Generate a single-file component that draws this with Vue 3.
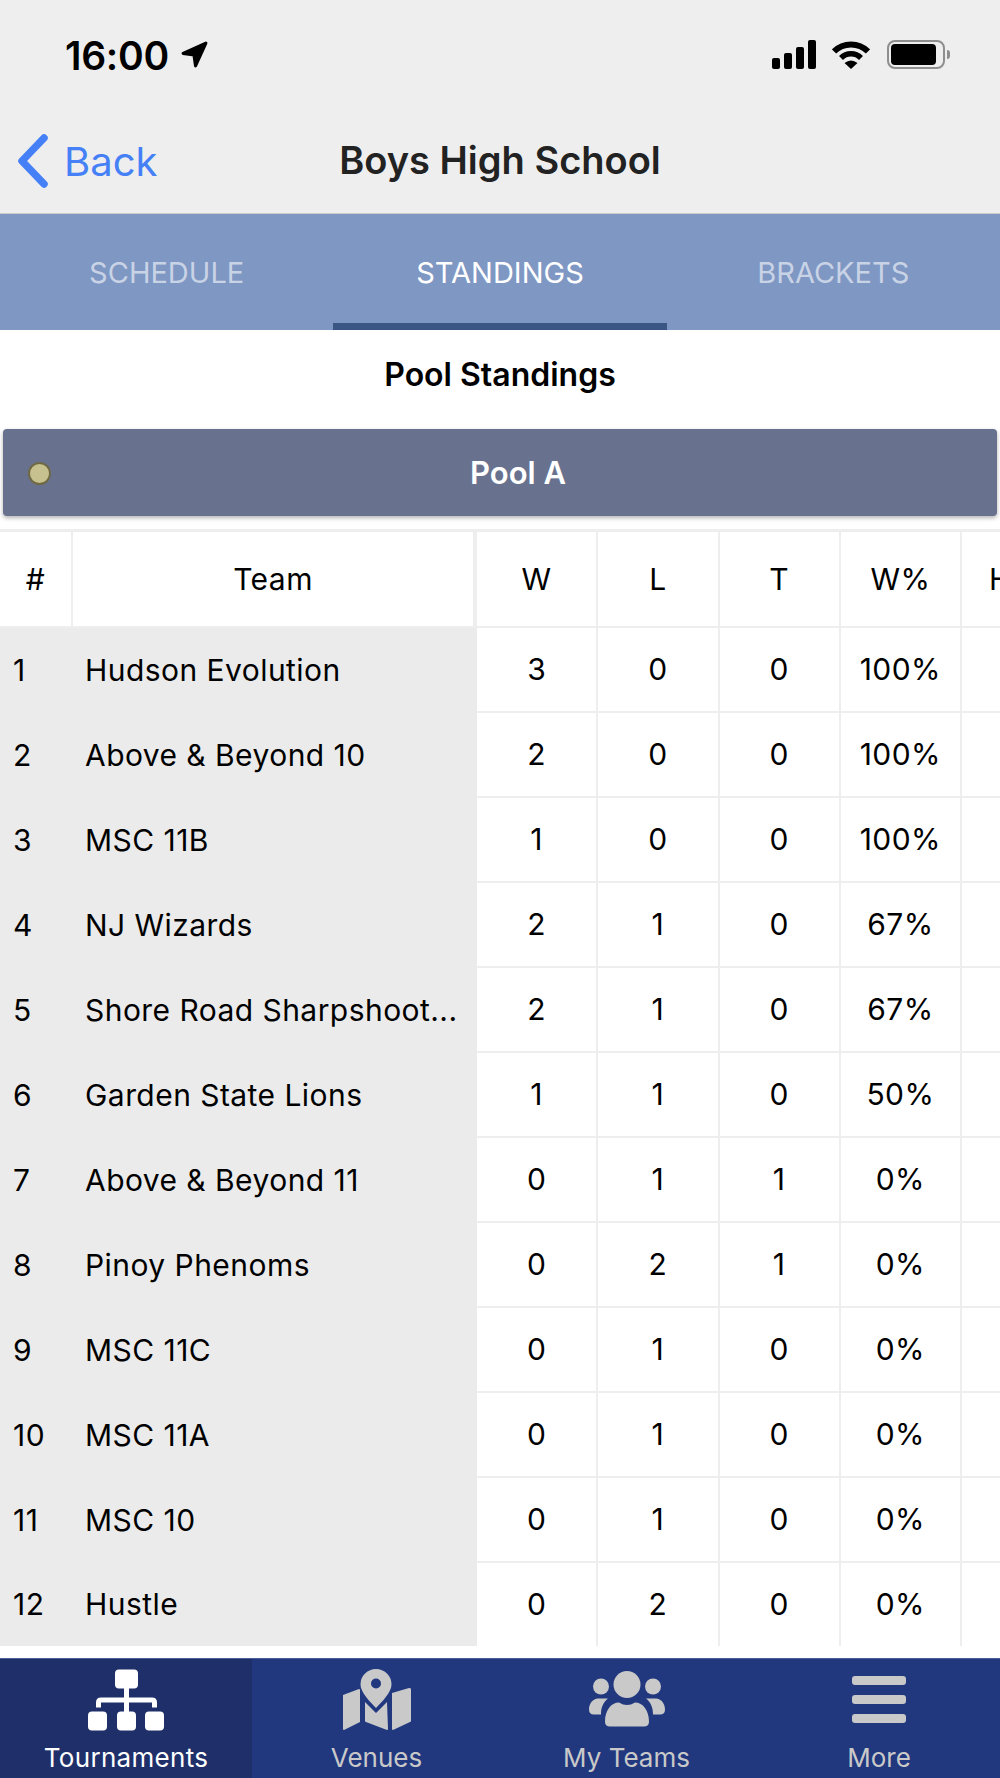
<template>
  <div class="page">
    <div class="status-bar">
      <div class="time">
        <span>16:00</span>
        <svg class="arrow" width="29" height="29" viewBox="0 0 28 28"><path d="M25 3 L3 13 L13.5 14.5 L15 25 Z" fill="#000" stroke="#000" stroke-width="3" stroke-linejoin="round"/></svg>
      </div>
      <div class="status-icons">
        <div class="signal">
          <i style="height: 11px"></i>
          <i style="height: 16px"></i>
          <i style="height: 22px"></i>
          <i style="height: 29px"></i>
        </div>
        <svg class="wifi" width="38" height="29" viewBox="0 0 38 29">
          <path d="M2 11.5 A24 24 0 0 1 36 11.5" fill="none" stroke="#000" stroke-width="6"/>
          <path d="M9 18 A14 14 0 0 1 29 18" fill="none" stroke="#000" stroke-width="5.5"/>
          <path d="M12.5 23 Q19 18 25.5 23 L19 29 Z" fill="#000"/>
        </svg>
        <div class="battery"><div class="battery-fill"></div></div>
        <div class="battery-nub"></div>
      </div>
    </div>

    <div class="nav-bar">
      <div class="back">
        <svg width="32" height="54" viewBox="0 0 32 54"><path d="M27 4 L5 27 L27 50" fill="none" stroke="#4580f7" stroke-width="7.5" stroke-linecap="round" stroke-linejoin="round"/></svg>
        <span>Back</span>
      </div>
      <div class="nav-title">Boys High School</div>
    </div>

    <div class="tabs">
      <div v-for="t in tabs" :key="t" :class="['tab', { active: t === 'STANDINGS' }]">{{ t }}</div>
    </div>

    <div class="section-title">Pool Standings</div>

    <div class="pool-bar">
      <span class="pool-dot"></span>
      <span class="pool-name">Pool A</span>
    </div>

    <div class="table">
      <div class="row head">
        <div class="cell num-head">#</div>
        <div class="cell team-head">Team</div>
        <div class="cell stat">W</div>
        <div class="cell stat">L</div>
        <div class="cell stat">T</div>
        <div class="cell stat">W%</div>
        <div class="cell cut">H</div>
      </div>
      <div v-for="(r, i) in rows" :key="r.team" class="row">
        <div class="cell num">{{ i + 1 }}</div>
        <div class="cell team">{{ r.team }}</div>
        <div class="cell stat">{{ r.w }}</div>
        <div class="cell stat">{{ r.l }}</div>
        <div class="cell stat">{{ r.t }}</div>
        <div class="cell stat">{{ r.pct }}</div>
        <div class="cell cut"></div>
      </div>
    </div>

    <div class="bottom-bar">
      <div class="bottom-item active">
        <svg width="76" height="61" viewBox="0 0 76 61" fill="#fff">
          <rect x="27" y="0" width="23" height="19" rx="4"/>
          <rect x="36" y="18" width="5" height="25"/>
          <path d="M10.5 38 V33 Q10.5 30.5 13 30.5 H64 Q66.5 30.5 66.5 33 V38" fill="none" stroke="#fff" stroke-width="5"/>
          <rect x="0" y="42" width="19" height="19" rx="4"/>
          <rect x="29" y="42" width="19" height="19" rx="4"/>
          <rect x="57" y="42" width="19" height="19" rx="4"/>
        </svg>
        <span>Tournaments</span>
      </div>
      <div class="bottom-item">
        <svg width="70" height="62" viewBox="0 0 70 62" fill="#c9c9c9">
          <path d="M1 26 L17 20 Q18 20 18 21 V53 L2 61 Q1 61 1 60 Z"/>
          <path d="M23 33 L34 44 L45 33 L46 60 Q46 61 45 61 L24 53 Q23 53 23 52 Z"/>
          <path d="M50 24 L67 19 Q69 19 69 20 V52 Q69 53 68 53 L51 61 Q50 61 50 60 Z"/>
          <path d="M34 0 A15.5 15.5 0 0 1 49.5 15.5 C49.5 23 40 33 34 39 C28 33 18.5 23 18.5 15.5 A15.5 15.5 0 0 1 34 0 Z"/>
          <circle cx="34" cy="14.5" r="5" fill="#21387f"/>
        </svg>
        <span>Venues</span>
      </div>
      <div class="bottom-item">
        <svg width="76" height="61" viewBox="0 0 76 61" fill="#c9c9c9">
          <circle cx="38" cy="15" r="13.5"/>
          <circle cx="12" cy="17" r="8"/>
          <circle cx="64" cy="17" r="8"/>
          <path d="M16 52 C16 41 22 33 30 33 Q38 38 46 33 C54 33 60 41 60 52 Q60 57 55 57 H21 Q16 57 16 52 Z"/>
          <path d="M19 29 H9 C4 29 0 34 0 40 Q0 45 5 45 H12 C12 38 14 33 19 29 Z"/>
          <path d="M57 29 H67 C72 29 76 34 76 40 Q76 45 71 45 H64 C64 38 62 33 57 29 Z"/>
        </svg>
        <span>My Teams</span>
      </div>
      <div class="bottom-item more">
        <div class="burger"><i></i><i></i><i></i></div>
        <span>More</span>
      </div>
    </div>
  </div>
</template>

<script setup>
const tabs = ['SCHEDULE', 'STANDINGS', 'BRACKETS']

const rows = [
  { team: 'Hudson Evolution', w: 3, l: 0, t: 0, pct: '100%' },
  { team: 'Above & Beyond 10', w: 2, l: 0, t: 0, pct: '100%' },
  { team: 'MSC 11B', w: 1, l: 0, t: 0, pct: '100%' },
  { team: 'NJ Wizards', w: 2, l: 1, t: 0, pct: '67%' },
  { team: 'Shore Road Sharpshoot...', w: 2, l: 1, t: 0, pct: '67%' },
  { team: 'Garden State Lions', w: 1, l: 1, t: 0, pct: '50%' },
  { team: 'Above & Beyond 11', w: 0, l: 1, t: 1, pct: '0%' },
  { team: 'Pinoy Phenoms', w: 0, l: 2, t: 1, pct: '0%' },
  { team: 'MSC 11C', w: 0, l: 1, t: 0, pct: '0%' },
  { team: 'MSC 11A', w: 0, l: 1, t: 0, pct: '0%' },
  { team: 'MSC 10', w: 0, l: 1, t: 0, pct: '0%' },
  { team: 'Hustle', w: 0, l: 2, t: 0, pct: '0%' }
]
</script>

<style>
html,
body {
  margin: 0;
  background: #fff;
}
</style>

<style scoped>
* {
  box-sizing: border-box;
}

.page {
  width: 1000px;
  height: 1778px;
  overflow: hidden;
  background: #fff;
  color: #000;
  font-family: Inter, "Liberation Sans", sans-serif;
}

/* status bar */
.status-bar {
  height: 107px;
  background: #eee;
  display: flex;
  justify-content: space-between;
  padding: 40px 50px 0 65px;
}

.time {
  display: flex;
  align-items: flex-start;
  gap: 11px;
  font-size: 39px;
  font-weight: 600;
  line-height: 31px;
  letter-spacing: -0.3px;
}

.status-icons {
  display: flex;
  align-items: flex-start;
}

.signal {
  display: flex;
  align-items: flex-end;
  gap: 4px;
  height: 29px;
  margin-right: 16px;
}

.signal i {
  display: block;
  width: 8px;
  border-radius: 2px;
  background: #000;
}

.wifi {
  margin-right: 17px;
}

.battery {
  width: 58px;
  height: 29px;
  border: 2px solid #8e8e8e;
  border-radius: 8px;
  padding: 2px 7px 2px 2px;
}

.battery-fill {
  height: 100%;
  background: #000;
  border-radius: 4px;
}

.battery-nub {
  width: 3px;
  height: 9px;
  margin: 10px 0 0 2px;
  background: #8e8e8e;
  border-radius: 0 3px 3px 0;
}

/* nav */
.nav-bar {
  height: 107px;
  background: #eee;
  border-bottom: 1px solid #ccc;
  position: relative;
  display: flex;
  align-items: center;
  justify-content: center;
}

.back {
  position: absolute;
  left: 17px;
  top: 27px;
  display: flex;
  align-items: center;
  gap: 15px;
  color: #4580f7;
  font-size: 40px;
}

.nav-title {
  font-size: 38px;
  font-weight: 600;
  color: #222;
}

/* tabs */
.tabs {
  height: 116px;
  background: #7f97c3;
  display: flex;
}

.tab {
  flex: 1;
  display: flex;
  align-items: center;
  justify-content: center;
  padding-top: 7px;
  font-size: 29px;
  color: #c9d3e6;
  border-bottom: 7px solid transparent;
}

.tab.active {
  color: #fff;
  border-bottom-color: #3a5683;
}

.section-title {
  height: 99px;
  display: flex;
  align-items: center;
  justify-content: center;
  padding-bottom: 10px;
  font-size: 32px;
  font-weight: 600;
}

.pool-bar {
  height: 87px;
  margin: 0 3px;
  background: #68728f;
  border-radius: 4px;
  box-shadow: 0 2px 4px rgba(0, 0, 0, 0.3);
  display: flex;
  align-items: center;
  justify-content: center;
  position: relative;
  padding: 0 0 0 36px;
}

.pool-dot {
  position: absolute;
  left: 25px;
  top: 33px;
  width: 23px;
  height: 23px;
  border-radius: 50%;
  background: #c7c18f;
  border: 2px solid #6f6a45;
}

.pool-name {
  color: #fff;
  font-size: 31px;
  font-weight: 600;
}

/* table */
.table {
  margin-top: 13px;
  border-top: 3px solid #eee;
}

.row {
  display: grid;
  grid-template-columns: 73px 404px repeat(4, 121.25px) 1fr;
  height: 85px;
  font-size: 30px;
  letter-spacing: 0.45px;
}

.row:last-child {
  height: 83px;
}

.row.head {
  height: 96px;
}

.cell {
  display: flex;
  align-items: center;
  justify-content: center;
  white-space: nowrap;
  padding-bottom: 1px;
}

.stat,
.cut {
  border-right: 2px solid #eee;
  border-bottom: 2px solid #eee;
}

.row:last-child .stat,
.row:last-child .cut {
  border-bottom: none;
}

.num,
.team {
  background: #ebebeb;
  justify-content: flex-start;
}

.num {
  padding-left: 13px;
}

.team {
  padding-left: 12px;
}

.num-head {
  border-right: 2px solid #eee;
  border-bottom: 2px solid #eee;
}

.team-head {
  border-right: 4px solid #eee;
  border-bottom: 2px solid #eee;
}

.cut {
  justify-content: flex-start;
  padding-left: 27px;
  border-right: none;
}

/* bottom tabs */
.bottom-bar {
  margin-top: 12px;
  height: 120px;
  background: #21387f;
  border-top: 1px solid #4c5f99;
  display: grid;
  grid-template-columns: 252px 249px 251px 248px;
}

.bottom-item {
  position: relative;
  display: flex;
  flex-direction: column;
  align-items: center;
  padding-top: 10px;
  color: #c9c9c9;
  font-size: 26px;
}

.bottom-item svg {
  display: block;
  height: 62px;
}

.bottom-item span {
  margin-top: 12px;
  line-height: 30px;
}

.bottom-item.active {
  background: #1e2f69;
  color: #fff;
}

.bottom-item.active span {
  letter-spacing: 0.3px;
}

.bottom-item.more {
  padding-left: 6px;
}

.burger {
  height: 62px;
  padding-top: 7px;
  display: flex;
  flex-direction: column;
  gap: 10px;
}

.burger i {
  display: block;
  width: 54px;
  height: 9px;
  border-radius: 3px;
  background: #c9c9c9;
}
</style>
